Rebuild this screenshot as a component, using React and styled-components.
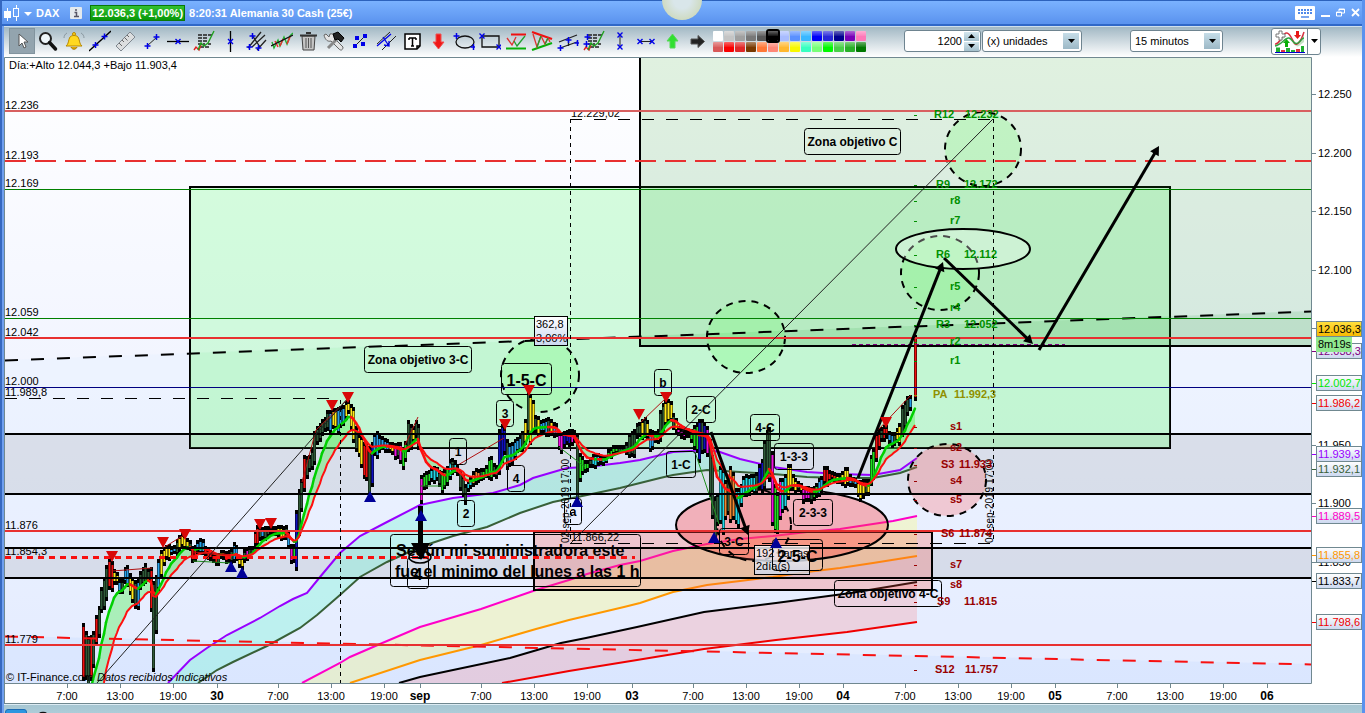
import React from "react";
import styled, { createGlobalStyle, css } from "styled-components";

const Global = createGlobalStyle`
  * { box-sizing: border-box; }
  body { margin: 0; font-family: "Liberation Sans", Arial, sans-serif; font-size: 11px; color: #000; }
  button, input, select { font: inherit; color: inherit; padding: 0; margin: 0; }
`;

const Window = styled.div`
  display: flex;
  flex-direction: column;
  min-height: 100vh;
  border-left: 2px solid #3668c0;
  border-right: 3px solid #5a92ee;
  position: relative;
  overflow: hidden;
`;
const TitleBar = styled.header`
  height: 26px;
  display: flex;
  align-items: center;
  padding: 0 2px 0 2px;
  color: #fff;
  font-weight: bold;
  background: linear-gradient(#7ab2ff, #5a92ee);
  border-top: 1px solid #2c62bc;
  border-bottom: 2px solid #3068c8;
`;
const TitleButton = styled.button`
  display: flex;
  align-items: center;
  height: 20px;
  border: 0;
  background: none;
  margin-right: ${(p) => p.$gap || 0}px;
`;
const Symbol = styled.span`
  margin-right: 11px;
`;
const Quote = styled.span`
  height: 16px;
  line-height: 14px;
  padding: 0 1px;
  margin: 0 4px 0 8px;
  border: 1px solid #087808;
  background: linear-gradient(#32c032, #089808);
`;
const Spacer = styled.span`
  flex: 1;
`;
const Halo = styled.div`
  position: absolute;
  left: 50%;
  top: 0;
  width: 40px;
  height: 20px;
  border-radius: 0 0 20px 20px;
  background: radial-gradient(circle at 50% 0, #d9e6ea 30%, #ccd8b8 80%, #b9b27c 100%);
  margin-left: -20px;
`;
const Body = styled.div`
  display: flex;
  flex-direction: column;
  flex: 1;
  border-left: 2px solid #6f9fee;
`;
const ToolBar = styled.div`
  height: 31px;
  display: flex;
  align-items: center;
  padding: 0 0 2px 5px;
  background: linear-gradient(#a2b8c4, #ffffff);
  border-top: 1px solid #cfe0ee;
`;
const Tool = styled.button`
  flex: none;
  width: 26px;
  height: 26px;
  display: flex;
  align-items: center;
  justify-content: center;
  border: 1px solid transparent;
  background: none;
  ${(p) => p.$on && css`background: #93a4ae; border-color: #82949e;`}
`;
const Palette = styled.div`
  display: grid;
  grid-template-columns: repeat(14, 10px);
  grid-auto-rows: 10px;
  gap: 1px;
  margin: 0 38px 0 2px;
`;
const Swatch = styled.button`
  border: 0;
  border-radius: 1px;
  background: linear-gradient(rgba(255, 255, 255, 0.4), rgba(255, 255, 255, 0.1) 45%, transparent 50%) ${(p) => p.$color};
  ${(p) => p.$on && css`outline: 2px solid #000; position: relative; z-index: 1;`}
`;
const Field = styled.div`
  position: relative;
  display: flex;
  align-items: center;
  flex: none;
  width: ${(p) => p.$w}px;
  height: 22px;
  margin-right: ${(p) => p.$gap}px;
  border: 1px solid #6e8490;
  border-radius: 3px;
  background: #fff;
`;
const NumberInput = styled.input`
  flex: 1;
  min-width: 0;
  border: 0;
  background: none;
  text-align: right;
  padding-right: 2px;
`;
const Spin = styled.div`
  display: flex;
  flex-direction: column;
  gap: 1px;
  padding-right: 1px;
`;
const SpinButton = styled.button`
  width: 15px;
  height: 9px;
  display: flex;
  align-items: center;
  justify-content: center;
  border: 0;
  background: linear-gradient(#d4e6ee, #a4c0cc);
`;
const Select = styled.select`
  appearance: none;
  width: 100%;
  height: 100%;
  border: 0;
  background: none;
  padding-left: 4px;
`;
const SelectArrow = styled.span`
  position: absolute;
  right: 2px;
  top: 2px;
  width: 16px;
  height: 16px;
  display: flex;
  align-items: center;
  justify-content: center;
  pointer-events: none;
  background: linear-gradient(#c6dde8, #9cb8c6);
`;
const SplitButton = styled.div`
  display: flex;
  height: 27px;
  border: 1px solid #6e8490;
  border-radius: 3px;
  background: #fff;
`;
const SplitPart = styled.button`
  width: ${(p) => p.$w}px;
  display: flex;
  align-items: center;
  justify-content: center;
  border: 0;
  background: none;
  & + & { border-left: 1px solid #6e8490; }
`;
const Chart = styled.svg`
  display: block;
  width: 100%;
  height: auto;
  background: #fff;
`;
const Label = styled.text`
  font-family: "Liberation Sans", Arial, sans-serif;
  font-size: ${(p) => p.$size || 11}px;
  font-weight: ${(p) => (p.$bold ? "bold" : "normal")};
  font-style: ${(p) => (p.$italic ? "italic" : "normal")};
`;
const Dock = styled.footer`
  flex: 1;
  min-height: 9px;
  display: flex;
  align-items: flex-start;
  gap: 12px;
  padding: 4px 1px 0;
  border-top: 1px solid #dcecf4;
  background: linear-gradient(#a6c6d2, #b4d2de);
  overflow: hidden;
`;
const DockButton = styled.button`
  width: 22px;
  height: 12px;
  border: 1px solid #1c6cb4;
  border-radius: 3px;
  background: #2c96e0;
`;
const DockTab = styled.button`
  border: 0;
  background: none;
  font-weight: bold;
  line-height: 9px;
`;

/* ---------- toolbar icons ---------- */
const B = "#0000e8";
const Cross = ({ x, y }) => <path d={`M${x - 2.5} ${y}h6M${x + 0.5} ${y - 3}v6`} stroke={B} strokeWidth="1.500" />;
const Ex = ({ x, y }) => <path d={`M${x - 2.5} ${y - 2.5}l5 5M${x + 2.5} ${y - 2.5}l-5 5`} stroke={B} strokeWidth="1.400" />;
const Dot = ({ x, y }) => <rect x={x - 2} y={y - 2} width="4" height="4" fill={B} stroke="none" />;

const report = (
  <>
    <path d="M5 5h14M5 8h10M5 11h9M5 14h7M15 14h3M7 17h9" stroke="#222" strokeWidth="1.500" strokeDasharray="4 1" />
    <path d="M1 20l2-3 3 3 2-5" stroke="#e02020" strokeWidth="1.400" />
    <path d="M5 20l3-7 3 3 4-3 3-6 3-6" stroke="#20a020" strokeWidth="1.400" />
  </>
);
const tools = [
  ["Puntero", <path d="M8 4v12l3-3 2 5 2-1-2-5h4z" fill="#fff" stroke="#555" />],
  ["Lupa", <><circle cx="8.500" cy="8.500" r="5.500" fill="#eef6fa" stroke="#222" strokeWidth="2" /><path d="M12.500 12.500l6 6.500" stroke="#111" strokeWidth="3.500" strokeLinecap="round" /></>],
  ["Alarma", <><path d="M3 16c3-2 2-6 4-9 1.500-2 6.500-2 8 0 2 3 1 7 4 9z" fill="#ffd820" stroke="#b88800" /><circle cx="11" cy="4" r="1.500" fill="#ffd820" stroke="#b88800" /><path d="M8 17c1 3 5 3 6 0" fill="#e0a800" stroke="#a87800" /><path d="M4 3c-2 1-3 3-3 5M18 3c2 1 3 3 3 5" stroke="#8a98a0" /></>],
  ["Recta", <><path d="M0 21L22 1" stroke="#000" strokeWidth="1.300" /><Cross x={6} y={15} /><Cross x={15} y={6.5} /></>],
  ["Regla", <><path d="M1 16L15 2l5 5L6 21z" fill="#dcdedf" stroke="#808890" /><path d="M4 13l3 3M7 10l2 2M9.500 7.500l3 3M12 5l2 2" stroke="#666" /></>],
  ["Segmento", <><path d="M6 16l10-9" stroke="#222" /><Cross x={6} y={16} /><Cross x={15} y={7} /></>],
  ["Horizontal", <><path d="M0 11.500h22" stroke="#000" strokeWidth="1.300" /><Ex x={11} y={11.5} /></>],
  ["Informe", report],
  ["Vertical", <><path d="M11.500 1v21" stroke="#000" strokeWidth="1.300" /><Ex x={11.5} y={11.5} /></>],
  ["Horquilla", <><path d="M3 18L16 2M7 17L20 5M12 20L21 10M7 5l8 12" stroke="#222" strokeWidth="1.300" /><Cross x={4} y={17} /><Cross x={7} y={6} /><Cross x={13} y={18} /></>],
  ["Regresión", <><path d="M1 12l2 6 4-8 2 6 4-9 3 7 3-8 3-3" stroke="#20b030" strokeWidth="1.400" /><path d="M4 11l3 6M9 16l3-7M16 14l3-7" stroke="#e83030" strokeWidth="1.500" /><path d="M0 16L22 5" stroke="#111" strokeWidth="1.300" /></>],
  ["Borrar", <><path d="M5 6h13l-1 14H6z" fill="#c4c4c4" stroke="#444" /><path d="M3 5.500h17M9 3h5" stroke="#333" strokeWidth="2" /><path d="M9 8v10M11.500 8v10M14 8v10" stroke="#555" /></>],
  ["Ajustes", <><path d="M1 5l2-1 3 3 1-3c4-1 5 2 4 4l9 9c0 3-2 4-4 2L8 11c-3 1-6-1-7-6z" fill="#e4e4e4" stroke="#666" /><path d="M5 18L14 9" stroke="#888" strokeWidth="3" /><path d="M10 4l5-2 6 6-3 4-3-3-3 1z" fill="#222" stroke="#000" /></>],
  ["Enlace", <><path d="M4 18L18 4" stroke="#222" /><Dot x={8} y={8} /><Dot x={14} y={14} /><Dot x={6} y={16} /><Dot x={16} y={6} /></>],
  ["Canal", <><path d="M2 14L15 2M7 20L21 6" stroke="#222" /><path d="M2 16L16 4M8 7l6 9m-5-1l5 1v-5" stroke={B} strokeWidth="1.300" /></>],
  ["Texto", <><path d="M4 4h15v12l-3 3H4z" fill="#fff" stroke="#000" strokeWidth="1.500" /><path d="M8 8h7M11.500 8v8M10 16h3M8 8v2M15 8v2M16 19v-3h3" stroke="#000" strokeWidth="1.500" /></>],
  ["Flecha abajo", <path d="M9 4h5v8h3l-5.500 7L6 12h3z" fill="#f01818" stroke="#f05050" />],
  ["Elipse", <><ellipse cx="12" cy="12" rx="9" ry="6" stroke="#111" strokeWidth="1.300" /><Cross x={3} y={6} /><Cross x={20} y={17} /></>],
  ["Rectángulo", <><path d="M3 6h17v11H3z" stroke="#111" strokeWidth="1.300" /><Ex x={3} y={6} /><Ex x={20} y={17} /></>],
  ["Soporte", <><path d="M6 4.500h15" stroke="#f01010" strokeWidth="2" /><path d="M1 18.500h20" stroke="#08b008" strokeWidth="2" /><path d="M2 8l5 7 4-8" stroke="#e03030" strokeWidth="1.300" /><path d="M9 11l3 5 8-10" stroke="#20a030" strokeWidth="1.300" /></>],
  ["Triángulo", <><path d="M1 2l20 7" stroke="#f01010" strokeWidth="2.200" /><path d="M1 20l20-7" stroke="#08b008" strokeWidth="2.200" /><path d="M2 4l4 13 4-11 4 8 3-6 2 4" stroke="#e03030" strokeWidth="1.300" /><path d="M6 17l4-11M14 14l3-6" stroke="#20a030" strokeWidth="1.300" /></>],
  ["Canal paralelo", <><path d="M2 12L20 5M3 18l17-6M11.500 16V9" stroke="#222" strokeWidth="1.300" /><Cross x={3} y={18} /><Cross x={20} y={13} /><Cross x={11} y={10} /></>],
  ["Informe rango", <>{report}<Cross x={4} y={7} /><Cross x={3} y={14} /></>],
  ["Distancia vertical", <><path d="M11 5v12" stroke="#222" /><Ex x={11} y={5} /><Ex x={11} y={17} /></>],
  ["Distancia horizontal", <><path d="M5 11.500h12" stroke="#222" /><Ex x={5} y={11.5} /><Ex x={17} y={11.5} /></>],
  ["Flecha arriba", <path d="M9 18h5v-7h3L11.500 4 6 11h3z" fill="#30e030" stroke="#58d858" />],
  ["Flecha derecha", <path d="M4 9h7V5.500l6.500 6-6.500 6V14H4z" fill="#222" stroke="#555" />],
];
const colors = ["#ffffff", "#c4c4c4", "#a0a0a0", "#787878", "#585858", "#000000", "#a8bcff", "#5a90ff", "#38b8ff", "#0000f8", "#2828d8", "#000090", "#7800b8", "#ff78b8",
  "#d85858", "#f80000", "#e02828", "#783800", "#ff7838", "#ff8878", "#ffb830", "#f8f800", "#38ffc0", "#78ff78", "#00f800", "#48d048", "#28b028", "#007800"];
const Caret = ({ up, fill = "#000" }) => <svg width="7" height="4"><path d={up ? "M0 4h7L3.500 0z" : "M0 0h7L3.500 4z"} fill={fill} /></svg>;

/* ---------- price series ---------- */
// Each entry: x, high, low, body colour.
const bars = `83 632 684 r|88 635 684 k|92 630 684 r|95 613 642 r|99 602 638 k|103 580 607 k|107 568 600 k|110 560 590 r|115 570 583 y|121 580 593 b|126 563 583 b|130 576 593 y|134 583 608 y|137 580 608 b|142 567 587 k|144 560 580 k|148 567 582 b|150 565 600 r|152 565 678 r|154 590 657 k|158 563 593 b|163 547 567 y|168 543 557 y|173 547 553 b|178 538 552 y|183 535 547 y|190 540 550 y|193 545 562 r|200 538 552 b|207 550 557 r|217 552 565 r|222 550 557 r|228 553 563 r|235 542 560 b|240 557 568 y|245 547 562 m|252 547 553 k|257 527 543 r|262 527 540 b|267 525 537 k|273 527 533 y|280 527 538 y|287 525 540 b|290 540 563 m|293 547 563 g|296 507 570 n|298 490 537 k|302 482 513 r|304 460 490 r|308 457 473 k|312 447 468 k|314 427 463 r|318 423 443 k|322 420 433 k|328 413 430 b|333 408 430 y|340 403 430 b|348 401 413 y|353 410 437 y|358 433 457 y|367 437 487 r|370 443 497 n|374 435 457 b|383 437 450 b|392 442 453 y|398 443 460 m|403 450 468 g|409 415 450 k|412 425 445 y|418 416 437 k|420 475 510 m|423 475 490 g|427 473 485 g|435 465 480 c|443 470 490 g|453 460 473 c|458 465 473 r|462 470 498 k|465 483 502 c|468 480 490 c|477 470 483 o|483 468 478 g|490 453 478 g|497 467 477 k|500 427 470 n|505 427 453 n|508 440 470 b|517 437 453 b|523 433 448 y|528 390 437 k|532 393 437 y|535 413 433 y|542 420 433 b|550 420 437 y|557 423 435 b|559 430 452 m|568 430 445 n|575 432 443 m|577 433 503 m|580 453 477 g|587 460 470 g|593 455 467 c|603 457 463 c|613 445 455 g|623 447 450 k|632 427 460 k|637 422 437 k|645 420 437 y|650 430 450 b|657 430 442 y|662 400 440 k|667 400 420 y|675 417 430 y|680 428 437 m|690 430 437 g|695 428 453 g|702 417 457 n|708 423 450 m|711 433 523 k|714 497 537 g|717 498 527 k|721 470 530 c|726 480 520 o|730 458 517 o|737 487 530 c|740 487 507 c|745 477 495 c|753 473 493 c|760 460 493 n|768 433 483 k|771 437 483 k|773 460 535 m|776 490 540 g|780 473 513 m|783 473 517 c|788 463 493 y|797 482 490 y|807 485 503 m|813 487 500 g|820 480 493 b|825 463 485 r|833 472 480 r|840 475 483 y|847 467 487 y|853 477 485 b|862 480 500 y|868 482 493 y|872 450 487 g|877 427 453 r|885 425 437 r|892 435 445 b|898 427 443 y|903 397 437 k|908 395 410 r|911 395 410 b`
  .split("|")
  .map((s) => s.split(" ").map((v, i) => (i === 3 ? v : Number(v))));
const bodyColor = { k: "#2f5a38", r: "#f01010", y: "#ffe818", b: "#28a0e8", m: "#f010e0", g: "#20e020", n: "#1010c0", c: "#20d8e8", o: "#f08830" };

const candles = [];
for (let i = 0, x = 83; x <= 912; i += 1, x += 2.6) {
  let j = 0;
  while (j < bars.length - 2 && bars[j + 1][0] < x) j += 1;
  const a = bars[j];
  const b = bars[j + 1];
  let t = Math.min(1, Math.max(0, (x - a[0]) / (b[0] - a[0])));
  t = t < 0.5 ? t * 0.6 : 1 - (1 - t) * 0.6;
  const hi = a[1] + (b[1] - a[1]) * t;
  const lo = a[2] + (b[2] - a[2]) * t;
  const n1 = Math.abs(Math.sin(i * 12.9)) * 0.3 - 0.15;
  const n2 = Math.abs(Math.sin(i * 7.3 + 1)) * 0.3 - 0.15;
  const c = Math.sin(i * 5.1) > 0.88 ? "k" : t < 0.5 ? a[3] : b[3];
  candles.push({ x: Math.round(x), hi: Math.round(hi + (lo - hi) * n1), lo: Math.round(lo - (lo - hi) * n2), fill: bodyColor[c] });
}
candles.push({ x: 915, hi: 336, lo: 399, fill: bodyColor.r });
let fast = 740;
let slow = 800;
const averages = candles.map((c) => {
  const mid = (c.hi + c.lo) / 2;
  fast += (mid - fast) * 0.22;
  slow += (mid - slow) * 0.12;
  return { x: c.x, fast, slow };
});

const line = (s) => s.split(" ").map((p) => p.split(",").map(Number));
const toPath = (pts) => pts.map((p, i) => `${i ? "L" : "M"}${p[0]} ${p[1]}`).join("");
const band = (a, b) => `${toPath(a)}${toPath([...b].reverse()).replace("M", "L")}Z`;
const purple = line("168,683 190,660 207,648 227,635 260,618 280,606 293,599 307,593 320,577 340,553 360,536 387,522 420,505 453,498 493,493 520,485 533,478 567,468 587,467 620,463 640,460 673,452 707,450 720,452 740,459 773,467 807,472 840,474 873,475 900,470 917,458");
const forest = line("198,683 217,670 233,662 267,646 300,628 317,615 340,595 360,577 387,562 420,547 453,536 487,527 520,513 553,502 587,495 620,488 660,478 673,475 707,470 740,472 773,474 807,477 840,478 873,478 900,473 917,467");
const magenta = line("302,683 340,663 350,657 380,644 420,627 481,609 510,599 536,590 569,580 587,574 620,565 640,561 673,551 707,544 740,539 773,536 807,532 840,529 873,524 893,521 917,516");
const orange = line("350,683 420,660 481,645 536,629 569,620 624,607 640,603 673,592 707,585 740,581 773,577 807,572 840,568 873,563 917,556");
const black = line("399,683 420,677 510,658 561,643 586,638 637,627 704,612 776,603 851,593 917,582");
const red = line("502,683 569,671 637,660 704,649 776,640 847,632 917,622");

const levels = [
  ["12.236", 111, "#d86060", 2], ["12.193", 161, "#e83030", 2, "21 9"], ["12.169", 189.5, "#008000", 1], ["12.059", 318.5, "#008000", 1],
  ["12.042", 338, "#e83030", 2], ["12.000", 387.5, "#000080", 1], ["11.876", 531, "#e83030", 2], ["11.779", 645, "#e83030", 2],
];
const pivots = [
  ["R12", "12.232", 934, 965, 118], ["R9", "12.172", 936, 964, 188], ["", "r8", 0, 950, 204], ["", "r7", 0, 950, 224], ["R6", "12.112", 936, 964, 258],
  ["", "r5", 0, 950, 290], ["", "r4", 0, 950, 311], ["R3", "12.052", 936, 964, 328], ["", "r2", 0, 950, 345], ["", "r1", 0, 950, 364], ["PA", "11.992,3", 933, 954, 398],
  ["", "s1", 0, 950, 430], ["", "s2", 0, 950, 451], ["S3", "11.933", 941, 959, 468], ["", "s4", 0, 950, 484], ["", "s5", 0, 950, 503], ["S6", "11.874", 941, 959, 537],
  ["", "s7", 0, 950, 568], ["", "s8", 0, 950, 588], ["S9", "11.815", 937, 964, 605], ["S12", "11.757", 935, 965, 673],
];
const pivotColor = (y) => (y < 380 ? "#009000" : y < 410 ? "#909000" : "#980000");
// Each entry: x, y, width, height, text size, lines.
const notes = [
  [364, 346, 107, 26, 12, "Zona objetivo 3-C"], [804, 128, 96, 26, 12, "Zona objetivo C"], [834, 580, 107, 26, 12, "Zona objetivo 4-C"],
  [501, 363, 50, 31, 16, "1-5-C"], [654, 369, 17, 26, 12, "b"], [686, 396, 29, 26, 12, "2-C"], [750, 414, 29, 26, 12, "4-C"], [774, 443, 39, 26, 12, "1-3-3"],
  [793, 499, 39, 26, 12, "2-3-3"], [666, 451, 29, 26, 12, "1-C"], [719, 528, 29, 26, 12, "3-C"], [772, 539, 50, 31, 16, "2-5-C"], [449, 438, 17, 26, 12, "1"],
  [457, 500, 17, 26, 12, "2"], [496, 400, 17, 26, 12, "3"], [507, 465, 17, 26, 12, "4"], [564, 498, 17, 26, 12, "a"], [407, 557, 21, 31, 16, "4"],
];
const sells = [[112, 556], [163, 542], [185, 534], [260, 524], [271, 523], [332, 405], [348, 397], [505, 424], [529, 390], [639, 414], [666, 397], [886, 422]];
const buys = [[231, 567], [242, 573], [370, 497], [421, 516], [577, 502], [714, 538], [776, 543]];
const circles = [[983, 149, 38, 37], [940, 273, 39, 37], [746, 337, 39, 36], [540, 375, 39, 37]];
const times = [[67, "7:00"], [120, "13:00"], [173, "19:00"], [217, "30"], [278, "7:00"], [331, "13:00"], [384, "19:00"], [420, "sep"], [481, "7:00"], [534, "13:00"], [587, "19:00"], [632, "03"],
  [693, "7:00"], [746, "13:00"], [799, "19:00"], [843, "04"], [905, "7:00"], [958, "13:00"], [1011, "19:00"], [1055, "05"], [1117, "7:00"], [1170, "13:00"], [1223, "19:00"], [1267, "06"]];
const prices = [["12.250", 94], ["12.200", 153], ["12.150", 211], ["12.100", 270], ["11.950", 445], ["11.900", 503], ["11.850", 562]];
const tags = [["12.038,3", 351, "#800080"], ["12.002,7", 383, "#00e800"], ["11.986,2", 403, "#f00000"], ["11.939,3", 454, "#9800ff"], ["11.932,1", 469, "#386038"],
  ["11.889,5", 516, "#ff00c8"], ["11.855,8", 555, "#ff9800"], ["11.833,7", 581, "#000"], ["11.798,6", 622, "#f00000"]];

function Arrow({ x1, y1, x2, y2, w = 3 }) {
  const a = Math.atan2(y2 - y1, x2 - x1);
  const at = (d, s) => `${x2 - d * Math.cos(a) - s * Math.sin(a)} ${y2 - d * Math.sin(a) + s * Math.cos(a)}`;
  return (
    <g>
      <path d={`M${x1} ${y1}L${at(6, 0)}`} stroke="#000" strokeWidth={w} />
      <path d={`M${x2} ${y2}L${at(9, 5)}L${at(9, -5)}Z`} />
    </g>
  );
}

function Note({ x, y, w, h, size, children }) {
  return (
    <g>
      <rect x={x + 0.5} y={y + 0.5} width={w} height={h} rx="3" fill="none" stroke="#000" />
      <Label $bold $size={size} x={x + w / 2 + 0.5} y={y + h / 2 + size / 2 - 1} textAnchor="middle">{children}</Label>
    </g>
  );
}

function PriceChart() {
  return (
    <Chart viewBox="4 57 1358 647" role="img" aria-label="DAX 15 minutos">
      <defs>
        <linearGradient id="sky" x1="0" y1="0" x2="0" y2="1"><stop offset="0" stopColor="#fff" /><stop offset="1" stopColor="#e4eaff" /></linearGradient>
        <linearGradient id="tag" x1="0" y1="0" x2="0" y2="1"><stop offset="0" stopColor="#fff" /><stop offset="1" stopColor="#ccd8f0" /></linearGradient>
        <linearGradient id="gold" x1="0" y1="0" x2="0" y2="1"><stop offset="0" stopColor="#ffe040" /><stop offset="1" stopColor="#f8b800" /></linearGradient>
        <clipPath id="plot"><rect x="5" y="58" width="1306" height="625" /></clipPath>
        <clipPath id="underTop"><rect x="560" y="112" width="80" height="12" /></clipPath>
      </defs>
      <g clipPath="url(#plot)" fill="none">
        <rect x="5" y="58" width="1306" height="626" fill="url(#sky)" />
        <path d="M5 360L1311 311V684H5Z" fill="#e4f0ff" fillOpacity=".35" />
        <path d="M5 636L1311 664V684H5Z" fill="#d4e2ff" fillOpacity=".6" />
        <path d="M5 434h1306v60H5zM5 548h1306v30H5z" fill="#808080" fillOpacity=".17" />
        <path d={band(purple, forest)} fill="#70f5d0" fillOpacity=".34" />
        <path d={band(magenta, orange)} fill="#ffff60" fillOpacity=".28" />
        <path d={band(black, red)} fill="#ff7070" fillOpacity=".22" />
        <g strokeWidth="2">
          <path d={toPath(purple)} stroke="#9800ff" /><path d={toPath(forest)} stroke="#386038" /><path d={toPath(magenta)} stroke="#ff00c8" />
          <path d={toPath(orange)} stroke="#ff9800" /><path d={toPath(black)} stroke="#000" /><path d={toPath(red)} stroke="#f00000" />
        </g>
        <rect x="190" y="187" width="980" height="261" fill="#82ff90" fillOpacity=".31" stroke="#000" strokeWidth="2" />
        <path d="M190 353L640 337V346H1170V448H190Z" fill="#90f090" fillOpacity=".13" />
        <rect x="640" y="40" width="700" height="306" fill="#109010" fillOpacity=".13" stroke="#000" strokeWidth="2" />
        <path d="M640 336L1311 311V345H641Z" fill="#30a830" fillOpacity=".12" />
        <rect x="534" y="532" width="398" height="58" fill="#ff5040" fillOpacity=".26" stroke="#000" strokeWidth="2" />
        {circles.map(([x, y, rx, ry]) => <ellipse key={x} cx={x} cy={y} rx={rx} ry={ry} fill="#70ff70" fillOpacity=".26" stroke="#000" strokeWidth="2" strokeDasharray="7 6" />)}
        <ellipse cx="947" cy="480" rx="39" ry="36" fill="#ff6060" fillOpacity=".28" stroke="#000" strokeWidth="2" strokeDasharray="7 6" />
        <ellipse cx="782" cy="525" rx="106" ry="36" fill="#ff4040" fillOpacity=".36" stroke="#000" strokeWidth="2" />
        <ellipse cx="754" cy="525" rx="37" ry="36" fill="#ff6060" fillOpacity=".15" stroke="#000" strokeWidth="2" strokeDasharray="7 6" />
        <ellipse cx="963" cy="249" rx="67" ry="20" fill="#fff" fillOpacity=".3" stroke="#000" strokeWidth="2" />

        <path d={band(averages.map((p) => [p.x, p.fast]), averages.map((p) => [p.x, p.slow]))} fill="#50f050" fillOpacity=".4" />
        {candles.map((c) => (
          <g key={c.x}>
            <path d={`M${c.x + 0.5} ${c.hi - 1}V${c.lo + 2}`} stroke="#000" strokeWidth="3" />
            <path d={`M${c.x + 0.5} ${c.hi + 3}V${Math.max(c.lo - 2, c.hi + 5)}`} stroke={c.fill} strokeWidth="2" />
          </g>
        ))}
        {averages.slice(1).map((p, i) => (
          <path key={p.x} d={`M${averages[i].x} ${averages[i].fast}L${p.x} ${p.fast}`} stroke={p.fast <= averages[i].fast ? "#00d000" : "#ff1010"} strokeWidth="2.500" strokeLinecap="round" />
        ))}
        <path d={toPath(averages.map((p) => [p.x, p.slow]))} stroke="#ff1010" strokeWidth="2" />
        <path d="M112 571L152 568M163 548L184 535M193 552L230 555M302 482L316 430L348 399M405 445L418 417M458 465L504 438M641 422L666 398M878 430L911 395" stroke="#b01010" />
        <path d="M193 561L230 563M421 486H445M559 447L585 467M695 452L719 524" stroke="#209020" />

        <path d="M5 360.500L1311 311.500" stroke="#000" strokeWidth="2" strokeDasharray="13 13" />
        <path d="M5 636.500L1311 664.500" stroke="#f81010" strokeWidth="2" strokeDasharray="13 13" />
        {levels.map(([name, y, color, w, dash]) => <path key={name} d={`M5 ${y}H1311`} stroke={color} strokeWidth={w} strokeDasharray={dash} />)}
        <path d="M5 434H1311M5 494H1311M5 548H1311M5 578H1311" stroke="#000" strokeWidth="2" />
        <path d="M5 557.500H635" stroke="#f81010" strokeWidth="3" strokeDasharray="6 5" />
        <path d="M852 344.500H1065" stroke="#800080" strokeDasharray="4 3" />
        <path d="M5 398.500H332M570 119.500H993M570 543.500H993" stroke="#000" strokeDasharray="12 12" />
        <path d="M340.500 400V684M570.500 119V543M993.500 119V543" stroke="#000" strokeDasharray="4 4" />
        <path d="M97 683L348 398M571 543L993 119" stroke="#222" />
        <ellipse cx="420" cy="557" rx="11" ry="6" stroke="#000" strokeWidth="1.500" />
        <g fill="#000">
          <path d="M418 506h5v37h7l-9 17-10-17h7z" />
          <Arrow x1={858} y1={478} x2={943} y2={262} />
          <Arrow x1={944} y1={258} x2={1033} y2={344} />
          <Arrow x1={1039} y1={350} x2={1159} y2={146} />
          <Arrow x1={711} y1={432} x2={748} y2={535} />
        </g>

        <g fill="#000">
          <rect x="754.500" y="545.500" width="55" height="29" fill="url(#tag)" fillOpacity=".8" stroke="#000" />
          <Label x="756" y="557">192 barras</Label>
          <Label x="756" y="570">2día(s)</Label>
          {notes.map(([x, y, w, h, size, text]) => <Note key={`${x}-${y}`} x={x} y={y} w={w} h={h} size={size}>{text}</Note>)}
          <rect x="390.500" y="534.500" width="250" height="52" rx="3" fill="none" stroke="#000" />
          <Label $bold $size={16} x="396" y="556">Según mi suministradora este</Label>
          <Label $bold $size={16} x="395" y="577">fue el minimo del lunes a las 1 h</Label>
          <rect x="534.500" y="316.500" width="33" height="29" fill="url(#tag)" stroke="#000" />
          <Label x="536" y="328">362,8</Label>
          <Label x="536" y="342">3,06%</Label>
          <path d="M534 338H568" stroke="#e83030" strokeWidth="2" />
          <g clipPath="url(#underTop)"><Label x="571" y="117">12.229,02</Label></g>
          <Label x="571" y="541">11.866,22</Label>
          <Label $size={10} transform="translate(569 543) rotate(-90)">02-sep-2019 17:00</Label>
          <Label $size={10} transform="translate(993 543) rotate(-90)">04-sep-2019 17:00</Label>
        </g>
        {sells.map(([x, y]) => <path key={x} d={`M${x - 6} ${y - 5}h12L${x} ${y + 6}z`} fill="#d80808" />)}
        {buys.map(([x, y]) => <path key={x} d={`M${x - 6} ${y + 5}h12L${x} ${y - 6}z`} fill="#000098" />)}
        {pivots.map(([name, value, nx, vx, y]) => (
          <g key={y} fill={pivotColor(y)}>
            {name && <Label $bold x={nx} y={y}>{name}</Label>}
            <Label $bold x={vx} y={y}>{value}</Label>
            <path d={`M914 ${y - 2.5}h3`} stroke={pivotColor(y)} />
          </g>
        ))}
        <g fill="#000">
          {levels.map(([name, y]) => <Label key={name} x="5" y={Math.floor(y) - 2}>{name}</Label>)}
          <Label x="5" y="396">11.989,8</Label>
          <Label x="5" y="555">11.854,3</Label>
          <Label x="9" y="69">Día:+Alto 12.044,3 +Bajo 11.903,4</Label>
          <Label x="6" y="681">© IT-Finance.com</Label>
          <Label $italic x="97" y="681">Datos recibidos indicativos</Label>
        </g>
      </g>
      <path d="M4.500 703V57.500H1311.500V683.500H4.500M4 703.500H1362" fill="none" stroke="#708890" />
      {times.map(([x, text]) => (
        <g key={x}>
          <path d={`M${x + 0.5} 684v4`} stroke="#708890" />
          <Label $bold={!text.includes(":")} $size={text.includes(":") ? 11 : 12} x={x} y="700" textAnchor="middle">{text}</Label>
        </g>
      ))}
      {prices.map(([text, y]) => (
        <g key={text}>
          <path d={`M1312 ${y + 0.5}h4`} stroke="#708890" />
          <Label x="1318" y={y + 4}>{text}</Label>
        </g>
      ))}
      {tags.map(([text, y, color]) => (
        <g key={text}>
          <path d={`M1312 ${y + 0.5}h4`} stroke={color} />
          <rect x="1316.500" y={y - 7.5} width="45" height="15" fill="url(#tag)" stroke="#708890" />
          <Label x="1318" y={y + 4} fill={color}>{text}</Label>
        </g>
      ))}
      <path d="M1312 328.500h4" stroke="#708890" />
      <rect x="1316.500" y="321.500" width="45" height="15" fill="url(#gold)" stroke="#708890" />
      <Label x="1318" y="333">12.036,3</Label>
      <rect x="1316" y="337" width="36" height="15" fill="#90e890" />
      <Label x="1318" y="348">8m19s</Label>
    </Chart>
  );
}

export default function App() {
  return (
    <>
      <Global />
      <Window>
        <TitleBar>
          <TitleButton $gap={4} aria-label="Menú">
            <svg width="28" height="18"><path d="M3.500 4v13M12.500 1v16" stroke="#fff" /><rect x="0" y="7" width="7" height="7" fill="#fff" /><rect x="9.500" y="4.500" width="5" height="8" fill="#6aa2f8" stroke="#fff" /><path d="M20 8h8l-4 4z" fill="#fff" /></svg>
          </TitleButton>
          <Symbol>DAX</Symbol>
          <TitleButton aria-label="Información">
            <svg width="12" height="12"><rect width="12" height="12" rx="1" fill="#e4eaee" /><path d="M5 3h2M4.500 5.500H6.500V9M4 9.500h5" stroke="#556" strokeWidth="1.500" fill="none" /></svg>
          </TitleButton>
          <Quote>12.036,3 (+1,00%)</Quote>
          <span>8:20:31 Alemania 30 Cash (25€)</span>
          <Spacer />
          <TitleButton $gap={6} aria-label="Teclado">
            <svg width="20" height="14"><rect width="20" height="14" rx="1" fill="#fff" /><path d="M3 4h14M3 7h14" stroke="#5088e8" strokeWidth="2" strokeDasharray="2 1" /><path d="M6 11h8" stroke="#5088e8" strokeWidth="1.500" /></svg>
          </TitleButton>
          <TitleButton $gap={6} aria-label="Minimizar"><svg width="9" height="10"><path d="M0 8h9" stroke="#fff" strokeWidth="2" /></svg></TitleButton>
          <TitleButton $gap={6} aria-label="Restaurar"><svg width="9" height="9" fill="none" stroke="#fff"><path d="M3 3V1h5.500v4H6M.5 4h5v4h-5zM3 1.500h6M0 4.500h6" /></svg></TitleButton>
          <TitleButton aria-label="Cerrar"><svg width="9" height="9"><path d="M1 1l7 7M8 1l-7 7" stroke="#fff" strokeWidth="1.800" /></svg></TitleButton>
        </TitleBar>
        <Halo />
        <Body>
          <ToolBar role="toolbar">
            {tools.map(([name, icon], i) => (
              <Tool key={name} $on={i === 0} aria-label={name}><svg width="22" height="22" viewBox="0 0 22 22" fill="none">{icon}</svg></Tool>
            ))}
            <Palette>
              {colors.map((c) => <Swatch key={c} $color={c} $on={c === "#000000"} aria-label={`Color ${c}`} />)}
            </Palette>
            <Field $w={77} $gap={1}>
              <NumberInput aria-label="Cantidad" defaultValue="1200" />
              <Spin>
                <SpinButton aria-label="Más"><Caret up /></SpinButton>
                <SpinButton aria-label="Menos"><Caret /></SpinButton>
              </Spin>
            </Field>
            <Field $w={100} $gap={48}>
              <Select aria-label="Unidad"><option>(x) unidades</option></Select>
              <SelectArrow><Caret /></SelectArrow>
            </Field>
            <Field $w={93} $gap={48}>
              <Select aria-label="Periodo"><option>15 minutos</option></Select>
              <SelectArrow><Caret /></SelectArrow>
            </Field>
            <SplitButton>
              <SplitPart $w={35} aria-label="Añadir indicador">
                <svg width="31" height="24" fill="none">
                  <path d="M1 17L9 8C13 4 17 14 21 15S28 10 30 4V13L25 17C20 20 15 5 11 8L4 16Z" fill="#c4e4c4" />
                  <path d="M1 15C6 16 8 3 13 4S19 17 23 15S28 8 30 3" stroke="#d83040" strokeWidth="1.500" />
                  <path d="M1 17C8 16 11 8 15 9S20 17 24 14S28 9 30 9" stroke="#30a040" strokeWidth="1.500" />
                  <path d="M5 2h3v3h3v3H8v3H5V8H2V5h3z" fill="#fff" stroke="#777" />
                  <path d="M22 2h3v4h2l-3.500 4L20 6h2z" fill="#e81818" /><path d="M11 18v-4H9l3.500-4L16 14h-2v4z" fill="#08b008" />
                  <path d="M2 18.500h4V23H2zM12 19h4v4h-4zM27 17h3v6h-3z" fill="#20b030" /><path d="M7 21h4v2H7zM22 20h4v3h-4z" fill="#e03040" /><path d="M17 21h4v2h-4z" fill="#20b030" />
                  <path d="M1 23.500h30" stroke="#0000d0" />
                </svg>
              </SplitPart>
              <SplitPart $w={13} aria-label="Más indicadores"><Caret /></SplitPart>
            </SplitButton>
          </ToolBar>
          <PriceChart />
          <Dock>
            <DockButton aria-label="Inicio" />
            <DockTab aria-label="Otra ventana"><svg width="8" height="8" fill="none"><path d="M0 6c1-3 7-3 8 0" stroke="#111" strokeWidth="2" /></svg></DockTab>
          </Dock>
        </Body>
      </Window>
    </>
  );
}
